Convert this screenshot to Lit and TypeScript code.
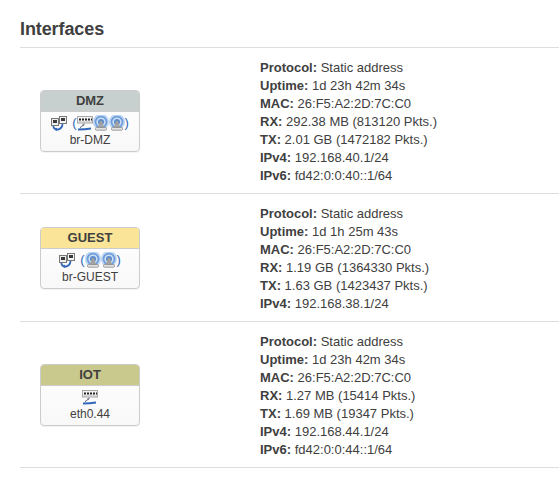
import { LitElement, html, svg, css } from 'lit';
import { customElement } from 'lit/decorators.js';

type Icon = 'bridge' | 'switch' | 'wifi';

interface Iface {
  zone: string;
  color: string;
  device: string;
  icons: Icon[];
  bridged: boolean;
  info: [string, string][];
}

const mac = '26:F5:A2:2D:7C:C0';
const proto = 'Static address';

const ifaces: Iface[] = [
  {
    zone: 'DMZ',
    color: '#c7d0ce',
    device: 'br-DMZ',
    icons: ['switch', 'wifi', 'wifi'],
    bridged: true,
    info: [
      ['Protocol', proto],
      ['Uptime', '1d 23h 42m 34s'],
      ['MAC', mac],
      ['RX', '292.38 MB (813120 Pkts.)'],
      ['TX', '2.01 GB (1472182 Pkts.)'],
      ['IPv4', '192.168.40.1/24'],
      ['IPv6', 'fd42:0:0:40::1/64'],
    ],
  },
  {
    zone: 'GUEST',
    color: '#f9e497',
    device: 'br-GUEST',
    icons: ['wifi', 'wifi'],
    bridged: true,
    info: [
      ['Protocol', proto],
      ['Uptime', '1d 1h 25m 43s'],
      ['MAC', mac],
      ['RX', '1.19 GB (1364330 Pkts.)'],
      ['TX', '1.63 GB (1423437 Pkts.)'],
      ['IPv4', '192.168.38.1/24'],
    ],
  },
  {
    zone: 'IOT',
    color: '#c9c98d',
    device: 'eth0.44',
    icons: ['switch'],
    bridged: false,
    info: [
      ['Protocol', proto],
      ['Uptime', '1d 23h 42m 34s'],
      ['MAC', mac],
      ['RX', '1.27 MB (15414 Pkts.)'],
      ['TX', '1.69 MB (19347 Pkts.)'],
      ['IPv4', '192.168.44.1/24'],
      ['IPv6', 'fd42:0:0:44::1/64'],
    ],
  },
];

const bridgeIcon = svg`
  <svg class="icon" width="16" height="16" viewBox="0 0 16 16">
    <path d="M2.500 10c-.5 3 1 4.500 3.500 3.500M11.500 9c0 3-2.500 5.500-7 6" fill="none" stroke="#2f66b8" stroke-width="1.800"/>
    <rect x="0.500" y="3.500" width="7" height="7" fill="#eeeeee" stroke="#777"/>
    <rect x="8.500" y="1.500" width="7" height="7" fill="#f4f4f4" stroke="#777"/>
    <rect x="2" y="5" width="4" height="3" fill="#3a3a3a"/>
    <rect x="10" y="3" width="4" height="3" fill="#3a3a3a"/>
  </svg>`;

const switchIcon = svg`
  <svg class="icon" width="16" height="16" viewBox="0 0 16 16">
    <rect x="0.500" y="1.500" width="15" height="6.500" fill="#f2f2f2" stroke="#a8a8a8"/>
    <path d="M2 4.500h2M5 4.500h2M8 4.500h2M11 4.500h2M14 4.500h1" stroke="#222" stroke-width="2"/>
    <path d="M1 7h14" stroke="#bdbdbd"/>
    <path d="M7 8.500v1.500l-3.500 2v1M5 10h2" fill="none" stroke="#6b7486"/>
    <path d="M1 14.500c4 0 9-.3 13-1" fill="none" stroke="#2f66b8" stroke-width="1.800"/>
  </svg>`;

const wifiIcon = svg`
  <svg class="icon" width="16" height="16" viewBox="0 0 16 16">
    <circle cx="8" cy="7" r="8" fill="#bcd5f2"/>
    <circle cx="8" cy="7" r="6.300" fill="#6c9cdb"/>
    <circle cx="8" cy="7" r="4.600" fill="#cfe0f5"/>
    <circle cx="8" cy="7" r="3" fill="#5a8acb"/>
    <path d="M7 6h2l2 6.500h-6z" fill="#a2a2a2"/>
    <rect x="2.500" y="12.500" width="11" height="2.700" rx="1" fill="#e2e2e2" stroke="#8a8a8a" stroke-width="0.800"/>
  </svg>`;

const icons: Record<Icon, unknown> = {
  bridge: bridgeIcon,
  switch: switchIcon,
  wifi: wifiIcon,
};

@customElement('app-root')
export class AppRoot extends LitElement {
  static styles = css`
    :host {
      display: block;
      font-family: 'Liberation Sans', Arial, sans-serif;
      font-size: 13px;
      line-height: 18px;
      color: #404040;
      background: #fff;
      padding: 0 0 11px 20px;
    }

    h2 {
      margin: 0;
      padding: 19px 0 7px;
      font-size: 18px;
      font-weight: 700;
      line-height: 21px;
      letter-spacing: -0.1px;
      color: #404040;
      border-bottom: 1px solid #ddd;
    }

    .row {
      display: flex;
      border-bottom: 1px solid #ddd;
    }

    .left {
      width: 240px;
      flex: none;
      display: flex;
      align-items: center;
      padding-left: 20px;
      box-sizing: border-box;
    }

    .card {
      width: 100px;
      box-sizing: border-box;
      border: 1px solid #ccc;
      border-radius: 4px;
      box-shadow: 0 1px 1px rgba(0, 0, 0, 0.05);
      background: linear-gradient(#fff, #f8f8f8);
      font-size: 12px;
      text-align: center;
      overflow: hidden;
    }

    .zone {
      height: 21px;
      line-height: 20px;
      font-size: 13px;
      font-weight: 700;
      color: #404040;
      border-bottom: 1px solid #ccc;
      box-sizing: border-box;
    }

    .ports {
      display: flex;
      justify-content: center;
      align-items: center;
      height: 17px;
      margin-top: 3px;
      color: #2f66b8;
      font-size: 13px;
    }

    .icon {
      display: block;
    }

    .gap {
      width: 5px;
    }

    .dev {
      line-height: 16px;
      padding-bottom: 3px;
    }

    .info {
      padding: 11px 0 8px;
    }

    .info b {
      font-weight: 700;
    }
  `;

  render() {
    return html`
      <h2>Interfaces</h2>
      ${ifaces.map(
        (i) => html`
          <div class="row">
            <div class="left">
              <div class="card">
                <div class="zone" style="background:${i.color}">${i.zone}</div>
                <div class="ports">
                  ${i.bridged
                    ? html`${icons.bridge}<span class="gap"></span><span>(</span>`
                    : ''}
                  ${i.icons.map((n) => icons[n])}
                  ${i.bridged ? html`<span>)</span>` : ''}
                </div>
                <div class="dev">${i.device}</div>
              </div>
            </div>
            <div class="info">
              ${i.info.map(
                ([k, v]) => html`<div><b>${k}:</b> ${v}</div>`
              )}
            </div>
          </div>
        `
      )}
    `;
  }
}
